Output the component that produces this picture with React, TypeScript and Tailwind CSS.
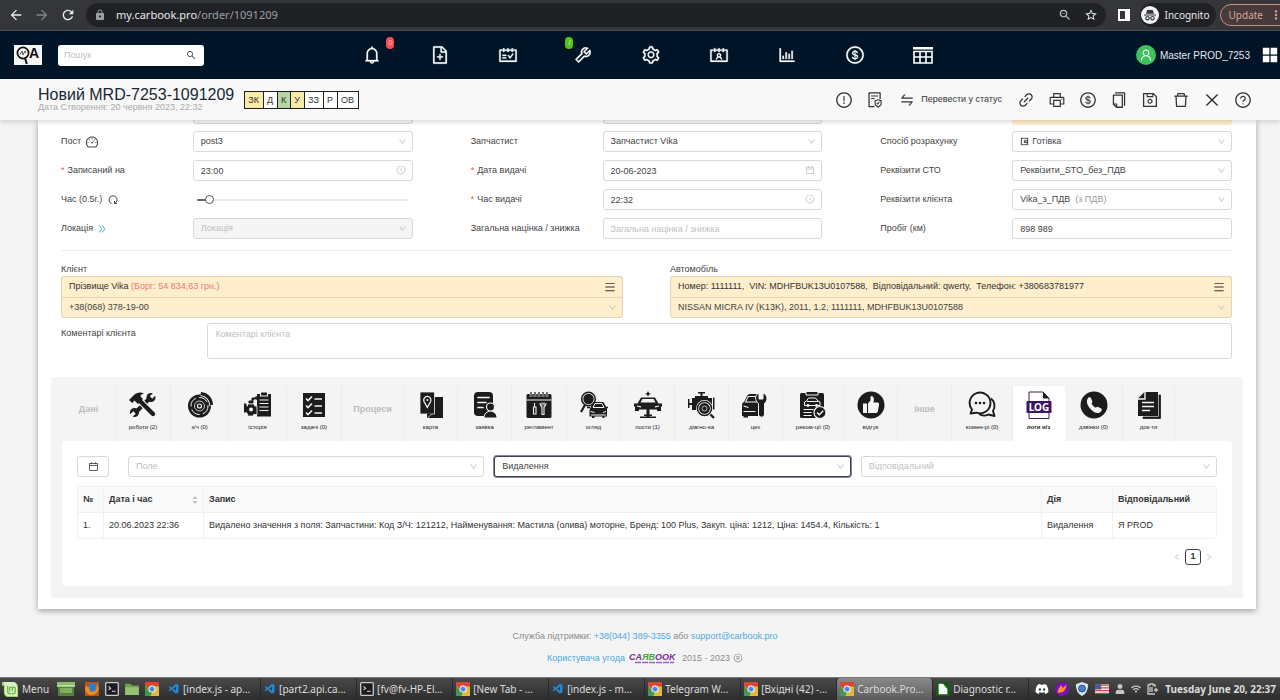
import type { ReactNode } from 'react'
import clsx from 'clsx'
import { twMerge } from 'tailwind-merge'
import {
  AiFillAppstore,
  AiOutlineBarChart,
  AiOutlineBell,
  AiOutlineCalendar,
  AiOutlineClockCircle,
  AiOutlineClose,
  AiOutlineContacts,
  AiOutlineCopy,
  AiOutlineDashboard,
  AiOutlineDelete,
  AiOutlineDollarCircle,
  AiOutlineDoubleRight,
  AiOutlineDown,
  AiOutlineExclamationCircle,
  AiOutlineFileAdd,
  AiOutlineFileProtect,
  AiOutlineLeft,
  AiOutlineLink,
  AiOutlineMenu,
  AiOutlinePrinter,
  AiOutlineQuestionCircle,
  AiOutlineRight,
  AiOutlineSave,
  AiOutlineSchedule,
  AiOutlineSearch,
  AiOutlineSetting,
  AiOutlineSwap,
  AiOutlineTool,
  AiOutlineTrademarkCircle,
  AiOutlineUser,
  AiOutlineWallet,
} from 'react-icons/ai'
import { FaDiscord, FaUser, FaWifi } from 'react-icons/fa'
import { MdArrowBack, MdArrowForward, MdLock, MdMoreVert, MdRefresh, MdStarBorder, MdZoomOut } from 'react-icons/md'
import { VscVscode } from 'react-icons/vsc'

const BG = '#f4f4f4'
const INK = '#1c1c1c'

/* ---------- tab icons, 28x28 ---------- */

function Glyph({ children }: { children: ReactNode }) {
  return (
    <svg viewBox="0 0 28 28" className="size-7" fill={INK} stroke="none" aria-hidden="true">
      {children}
    </svg>
  )
}

const RepairIcon = () => (
  <Glyph>
    <path d="M6 22 21 7" stroke={INK} strokeWidth="4" />
    <circle cx="5.500" cy="21.500" r="4.500" />
    <circle cx="22" cy="6.500" r="4.500" />
    <path d="m1 26 4.500-4.500M22 6.500 27 1.500" stroke={BG} strokeWidth="3.400" />
    <path d="m9 8 17 17" stroke={BG} strokeWidth="6.500" />
    <path d="m10 9 14 14" stroke={INK} strokeWidth="4.400" strokeLinecap="round" />
    <path d="m0 9 4.500-4.500C8 1 12 1 15 2.500c-2.500.5-3.500 1.500-3.500 3L14 8l-5 5-3.500-3.500-2.300 2.600z" />
  </Glyph>
)

const BrakeIcon = () => (
  <Glyph>
    <circle cx="13.500" cy="15" r="11.500" />
    <g fill="none" stroke={BG}>
      <circle cx="13.500" cy="15" r="8.500" strokeWidth="1" strokeDasharray="10 3" />
      <circle cx="13.500" cy="15" r="5" strokeWidth=".8" />
      <circle cx="13.500" cy="15" r="2" strokeWidth="1.200" />
      <path d="M14.500 4.500A10.500 10.500 0 0 1 24 15" strokeWidth="1.200" />
    </g>
    <path d="M15 1c7 .5 12 6 12 13h-3C24 8.500 20 4.500 14.500 4z" />
  </Glyph>
)

const HistoryIcon = () => (
  <Glyph>
    <path d="M13 3h3V1.500h8V3h3v22.500H13z" />
    <path d="M16.500 1v4h7V1M15.500 9h9M15.500 12.500h9M15.500 16h9M15.500 19.500h9" stroke={BG} strokeWidth="1.100" fill="none" />
    <path d="M1 15h2.500v-2h7v2H13v8.500H9.500V25h-6v-2L1 20z" stroke={BG} strokeWidth=".8" />
    <path d="M0 13h2v8H0zM5 10h4v2H5zM8 11V7h4" stroke={INK} strokeWidth="1" />
    <circle cx="7" cy="18.500" r="2" fill={BG} />
    <circle cx="12.500" cy="7" r="1.700" />
  </Glyph>
)

const TasksIcon = () => (
  <Glyph>
    <path d="M3 2h22v24H3z" />
    <path
      d="m6 7.500 2 2 4-4M6 14.500l2 2 4-4M6 21.500l2 2 4-4M14.500 8h7.500M14.500 15h7.500M14.500 22h7.500"
      fill="none"
      stroke={BG}
      strokeWidth="1.600"
    />
  </Glyph>
)

const MapIcon = () => (
  <Glyph>
    <path d="M17 6h9v21H11l4-4h2z" />
    <path d="M3 1h14.500v22H3z" stroke={BG} strokeWidth=".8" />
    <path d="M10.300 16.500 7 10.500a3.600 3.600 0 1 1 6.600 0z" fill="none" stroke={BG} strokeWidth="1.300" />
    <circle cx="10.300" cy="9" r="1" fill={BG} />
    <path d="M10 22.500h5l-5 4.500z" />
  </Glyph>
)

const RequestIcon = () => (
  <Glyph>
    <rect x="3" y="1" width="19" height="24" rx="4" />
    <path d="M7 6.500h11M7 11.500h8M7 16.500h5" stroke={BG} strokeWidth="1.700" strokeLinecap="round" />
    <circle cx="19.500" cy="16" r="4" stroke={BG} strokeWidth="1.200" />
    <path d="M13 27c0-9 13-9 13 0z" stroke={BG} strokeWidth="1" />
  </Glyph>
)

const ScheduleIcon = () => (
  <Glyph>
    <rect x="1.500" y="3" width="25" height="24" rx="1.500" />
    <path d="M1.500 9h25" stroke={BG} strokeWidth="1" />
    <path d="M6 1v5M10 1v5M14 1v5M18 1v5M22 1v5" stroke={BG} strokeWidth="2.500" />
    <path d="M6 1v5M10 1v5M14 1v5M18 1v5M22 1v5" stroke={INK} strokeWidth="1.200" />
    <path
      d="M9.500 12v4M8.500 16h2.500v7H8.500zM15 12c0 3 1 3 2 4v7.500h2V16c1-1 2-1 2-4M17 11.500v3M19 11.500v3"
      fill="none"
      stroke={BG}
      strokeWidth="1.100"
    />
  </Glyph>
)

const InspectIcon = () => (
  <Glyph>
    <circle cx="8.500" cy="8" r="6.800" fill="none" stroke={INK} strokeWidth="1.500" />
    <circle cx="8.500" cy="8" r="5.200" />
    <path d="m5 14-4 7" stroke={INK} strokeWidth="2.200" />
    <path d="M10 17.500 13.500 11h10l3.500 6.500v8h-2.500V27h-2v-1.500h-8V27H12v-1.500H9.500v-6z" />
    <path d="M13 16.500 15 12.500h7l2 4zM10.500 20.500l4 1M26 20.500l-3 1M11 24h15" fill="none" stroke={BG} strokeWidth="1" />
    <path d="M7 16.500h3M26 16.500h2" stroke={INK} strokeWidth="1.400" />
  </Glyph>
)

const LiftIcon = () => (
  <Glyph>
    <path d="M0 12.500h3.500L7 6.500h14l3.500 6H28V15l-1 1v4h-4v-1.500H5V20H1v-4l-1-1z" />
    <path d="m6.500 11.500 1.800-3.500h11.400l1.800 3.500z" fill={BG} />
    <path d="m3 15 4 .8M25 15l-4 .8" stroke={BG} strokeWidth="1.200" />
    <path d="M12.500 18h3v8h-3zM6 25.500h16V27H6zM10 23.500h8V25h-8z" />
    <path d="m14 0 1 2 2 1-2 .8-1 2-1-2-2-.8 2-1z" />
  </Glyph>
)

const DiagnosticIcon = () => (
  <Glyph>
    <path d="M10 1h7v1.500h-2.500V5h-2V2.500H10zM4 7h3V5h13v2h4v12H4zM0 8h1.500v9H0zM1.500 12H4v2H1.500zM25 6.500h1.500v12H25z" />
    <circle cx="16.500" cy="17.500" r="8.500" fill={BG} />
    <circle cx="16.500" cy="17.500" r="7" fill="none" stroke={INK} strokeWidth="1.500" />
    <circle cx="16.500" cy="17.500" r="5.400" />
    <circle cx="16.500" cy="17.500" r="2.500" fill="none" stroke={BG} strokeWidth=".7" />
    <path d="m22.500 23.500 3.500 3.500" stroke={INK} strokeWidth="2.400" />
  </Glyph>
)

const WorkshopIcon = () => (
  <Glyph>
    <path d="M0 14q0-2.500 2-3l3-6q1-2 3-2h8v22H6v1.500H1.500V25H0z" />
    <path d="m3.500 11 2.800-5.500H15V11zM1.500 15l5 1.500M1.500 20.500h12" fill="none" stroke={BG} strokeWidth="1.100" />
    <path d="M5 9.500 7 6h7v3.500z" />
    <path
      d="M16.500 12.500C12.500 9.500 12.500 4 17 2v6h4V2c5 2 5 7.500 1.500 10.500V24q-3 4.500-6 0z"
      stroke={BG}
      strokeWidth="1"
    />
  </Glyph>
)

const AdviceIcon = () => (
  <Glyph>
    <rect x="1" y="2" width="24" height="25" rx="1.500" />
    <path d="M7 .5h12V4H7z" stroke={BG} strokeWidth="1" />
    <path
      d="M5.500 14.500V11l2-1 2-3h7l2.500 3 2 1v3.500zM8 10.500h11M4.500 18.500h10M4.500 21.500h8M4.500 24.500h8"
      fill="none"
      stroke={BG}
      strokeWidth="1"
    />
    <circle cx="9" cy="14.500" r="1.400" fill={BG} />
    <circle cx="17.500" cy="14.500" r="1.400" fill={BG} />
    <circle cx="21" cy="21.500" r="6" stroke={BG} strokeWidth="1.200" />
    <path d="m18 21.500 2.300 2.300 4-4" fill="none" stroke={BG} strokeWidth="1.400" />
  </Glyph>
)

const ThumbIcon = () => (
  <Glyph>
    <circle cx="14" cy="14" r="13.500" />
    <path
      d="M6 12.500h4V22H6zM11 12.500l2.500-3V5.500c3-1 4 1.500 3 6H21q1.500.5 1 2.500l-1.200 6.500Q20.500 22 19 22h-8z"
      fill={BG}
    />
  </Glyph>
)

const CommentsIcon = () => (
  <Glyph>
    <g fill="none" stroke={INK} strokeWidth="1.900" strokeLinejoin="round">
      <path d="M2.500 22.500 4 18.500a10.400 10.400 0 1 1 4.500 3.200z" />
      <path d="M23 7.500a9.500 9.500 0 0 1 2 12.500l1.500 5-6-1.500q-5 2.500-9.500-.5" />
    </g>
    <circle cx="8" cy="12" r="1.300" />
    <circle cx="12" cy="12" r="1.300" />
    <circle cx="16" cy="12" r="1.300" />
  </Glyph>
)

const LogIcon = () => (
  <Glyph>
    <path d="M4 27.500V1h14l6 6v20.500z" fill="#fff" stroke="#3b1d5c" strokeWidth="1" />
    <path d="M18 1v6.500h6z" fill="#1c1c1c" />
    <rect x="1.500" y="10" width="25" height="12" rx="1" fill="#3b1466" />
    <text x="14" y="19.500" textAnchor="middle" fontSize="10" fontWeight="700" fontFamily="Noto Sans, sans-serif" fill="#fff">
      LOG
    </text>
  </Glyph>
)

const CallIcon = () => (
  <Glyph>
    <circle cx="14" cy="14" r="13.500" />
    <path
      d="M8.500 6.500q1.500-1 2.300.5l1.500 3q.5 1.200-.8 2.200c1 2.300 2.300 3.600 4.500 4.500q1-1.300 2.200-.7l3 1.600q1.300.8.400 2.200C19 23.500 15 22.500 11 18.500S5.500 9.500 8.500 6.500z"
      fill={BG}
    />
  </Glyph>
)

const DocsIcon = () => (
  <Glyph>
    <path d="M24 4h1.500v23.500H8V26h16z" stroke={INK} strokeWidth=".8" />
    <path d="M9.500 1H23v24H3V7.500z" />
    <path d="M10 1v7H3M7 11.500h12M7 15.500h12M7 19.500h8" fill="none" stroke={BG} strokeWidth="1.400" />
  </Glyph>
)

type Tab = { label: string; width: string; Icon?: () => ReactNode; active?: boolean }

const TABS: Tab[] = [
  { label: 'Дані', width: 'w-[54px]' },
  { label: 'роботи (2)', width: 'w-[55px]', Icon: RepairIcon },
  { label: 'з/ч (0)', width: 'w-[58px]', Icon: BrakeIcon },
  { label: 'історія', width: 'w-[58px]', Icon: HistoryIcon },
  { label: 'задачі (0)', width: 'w-[55px]', Icon: TasksIcon },
  { label: 'Процеси', width: 'w-[62px]' },
  { label: 'карта', width: 'w-[54px]', Icon: MapIcon },
  { label: 'заявка', width: 'w-[54px]', Icon: RequestIcon },
  { label: 'регламент', width: 'w-[55px]', Icon: ScheduleIcon },
  { label: 'огляд', width: 'w-[54px]', Icon: InspectIcon },
  { label: 'пости (1)', width: 'w-[54px]', Icon: LiftIcon },
  { label: 'діагно-ка', width: 'w-[54px]', Icon: DiagnosticIcon },
  { label: 'цех', width: 'w-[54px]', Icon: WorkshopIcon },
  { label: 'реком-ції (0)', width: 'w-[61px]', Icon: AdviceIcon },
  { label: 'відгук', width: 'w-[54px]', Icon: ThumbIcon },
  { label: 'Інше', width: 'w-[54px]' },
  { label: 'комен-рі (0)', width: 'w-[61px]', Icon: CommentsIcon },
  { label: 'логи н/з', width: 'w-[52px]', Icon: LogIcon, active: true },
  { label: 'дзвінки (0)', width: 'w-[58px]', Icon: CallIcon },
  { label: 'док-ти', width: 'w-[52px]', Icon: DocsIcon },
]

/* ---------- form controls ---------- */

const CONTROL =
  'block h-[21px] w-full appearance-none rounded-[3px] border border-[#d9d9d9] bg-white px-[7px] text-[#444] outline-none placeholder:text-[#bfbfbf]'

function Select({
  id,
  value,
  label,
  className,
  placeholder,
}: {
  id?: string
  value: string
  label?: string
  className?: string
  placeholder?: boolean
}) {
  return (
    <div className="relative">
      <select
        id={id}
        aria-label={label}
        className={twMerge(CONTROL, 'pr-6', placeholder && 'text-[#bfbfbf]', className)}
        defaultValue={value}
      >
        <option>{value}</option>
      </select>
      <AiOutlineDown className="pointer-events-none absolute top-1.5 right-1.5 size-[9px] text-[#bfbfbf]" />
    </div>
  )
}

function TextField({ id, value, placeholder, icon }: { id: string; value?: string; placeholder?: string; icon?: ReactNode }) {
  return (
    <div className="relative">
      <input id={id} type="text" className={CONTROL} defaultValue={value} placeholder={placeholder} />
      {icon && <span className="pointer-events-none absolute top-[5px] right-[7px] text-[#bfbfbf]">{icon}</span>}
    </div>
  )
}

function Field({
  id,
  label,
  required,
  icon,
  children,
}: {
  id: string
  label: string
  required?: boolean
  icon?: ReactNode
  children: ReactNode
}) {
  return (
    <div className="grid h-[21px] grid-cols-[3fr_5fr]">
      <label htmlFor={id} className="flex items-center whitespace-nowrap">
        {required && <span className="mr-[3px] text-[#ff4d4f]">*</span>}
        {label}
        {icon}
      </label>
      {children}
    </div>
  )
}

/* ---------- browser bar ---------- */

function BrowserBar() {
  return (
    <div className="flex h-[31px] items-center overflow-hidden border-b border-[#4b4c50] bg-[#35363a] pl-2 font-['Noto_Sans',sans-serif] text-[#e8eaed]">
      <button type="button" aria-label="Back">
        <MdArrowBack className="size-4" />
      </button>
      <button type="button" aria-label="Forward" className="ml-2.5 text-[#85868a]">
        <MdArrowForward className="size-4" />
      </button>
      <button type="button" aria-label="Reload" className="ml-2.5">
        <MdRefresh className="size-4" />
      </button>
      <div className="ml-2.5 flex h-6 min-w-0 flex-1 items-center rounded-full bg-[#202124] pr-2 pl-2">
        <MdLock className="size-3 text-[#9aa0a6]" />
        <span className="ml-2.5 text-[11px]">
          my.carbook.pro<span className="text-[#9aa0a6]">/order/1091209</span>
        </span>
        <MdZoomOut className="ml-auto size-3.5 text-[#bdc1c6]" />
        <MdStarBorder className="ml-3 size-3.5 text-[#e8eaed]" />
      </div>
      <svg viewBox="0 0 12 12" className="ml-3 size-3" aria-hidden="true">
        <path d="M1 1h10v10H1z" fill="none" stroke="#fff" strokeWidth="2" />
        <path d="M7 1h4v10H7z" fill="#fff" />
      </svg>
      <div className="ml-2.5 flex h-6 items-center rounded-full bg-[#202124] pr-1.5 pl-px">
        <svg viewBox="0 0 18 18" className="size-[18px]" aria-hidden="true">
          <circle cx="9" cy="9" r="9" fill="#f1f3f4" />
          <path d="M3 8.500h12v1H3zM5 7.700 6.200 4h5.600L13 7.700z" fill="#35363a" />
          <g fill="none" stroke="#35363a" strokeWidth="1.100">
            <circle cx="6.500" cy="12.200" r="1.700" />
            <circle cx="11.500" cy="12.200" r="1.700" />
            <path d="M8.200 12h1.600" />
          </g>
        </svg>
        <span className="ml-1.5 text-[10px]">Incognito</span>
      </div>
      <button
        type="button"
        className="-mr-3 ml-1 flex h-[22px] items-center rounded-full border border-[#c58f86] bg-[#463a3b] pr-2 pl-2 text-[10px] text-[#dca69c]"
      >
        Update
        <MdMoreVert className="ml-1.5 size-3.5" />
      </button>
    </div>
  )
}

/* ---------- application nav ---------- */

const GridIcon = ({ className }: { className?: string }) => (
  <svg viewBox="0 0 20 20" className={className} aria-hidden="true">
    <path d="M0 2h20v2.500H0z" fill="currentColor" />
    <path d="M1 6.500h18V18H1zM1 12h18M7 6.500V18M13 6.500V18" fill="none" stroke="currentColor" strokeWidth="1.600" />
  </svg>
)

const NAV = [
  { name: 'Сповіщення', Icon: AiOutlineBell, badge: 'red' },
  { name: 'Нове замовлення', Icon: AiOutlineFileAdd },
  { name: 'Розклад', Icon: AiOutlineSchedule },
  { name: 'Ремонт', Icon: AiOutlineTool, badge: 'green' },
  { name: 'Налаштування', Icon: AiOutlineSetting },
  { name: 'Контакти', Icon: AiOutlineContacts },
  { name: 'Звіти', Icon: AiOutlineBarChart },
  { name: 'Каса', Icon: AiOutlineDollarCircle },
  { name: 'Таблиця', Icon: GridIcon },
]

function NavBar() {
  return (
    <nav className="flex h-12 items-center bg-[#001428] pl-3.5 text-white">
      <svg viewBox="0 0 28 20" className="h-5 w-7" aria-label="QA">
        <path d="M0 0h28v20H0z" fill="#f5f5f5" />
        <circle cx="9" cy="8" r="5.600" fill="none" stroke="#111" strokeWidth="1.700" />
        <path d="m11 13 1.800 6" stroke="#111" strokeWidth="2" />
        <path d="M6 9.500 8 6l1 4 2-4 1 2" fill="none" stroke="#444" strokeWidth=".9" />
        <text x="15" y="13" fontSize="14" fontWeight="700" fontFamily="Liberation Sans, sans-serif" fill="#111">
          A
        </text>
      </svg>
      <div className="relative ml-4 w-[146px]">
        <input
          type="search"
          aria-label="Пошук"
          placeholder="Пошук"
          className="block h-[21px] w-full appearance-none rounded-[3px] bg-white px-1.5 text-[9px] text-[#444] outline-none placeholder:text-[#bfbfbf]"
        />
        <AiOutlineSearch className="pointer-events-none absolute top-[5px] right-2 size-2.5 text-[#333]" />
      </div>
      <div className="flex flex-1 justify-center gap-12 pr-11">
        {NAV.map(({ name, Icon, badge }) => (
          <button key={name} type="button" aria-label={name} className={clsx('relative', badge === 'green' && 'pl-[7px]')}>
            <Icon className="size-5 [stroke-width:14]" />
            {badge === 'red' && (
              <span className="absolute -top-2 -right-3 h-3 w-2 rounded-full bg-[#ff4d4f] text-center text-[7px] leading-3 text-[#ffd0d0]">
                0
              </span>
            )}
            {badge === 'green' && (
              <span className="absolute -top-2 -left-px h-3 w-2 rounded-full bg-[#52c41a] text-center text-[7px] leading-3 text-[#d5f5c4]">
                /
              </span>
            )}
          </button>
        ))}
      </div>
      <span className="grid size-5 place-items-center rounded-full bg-[#3fc25c]">
        <AiOutlineUser className="size-3.5" />
      </span>
      <span className="ml-1 text-[10px] text-[#e6eaee]">Master PROD_7253</span>
      <button type="button" aria-label="Меню" className="ml-2.5">
        <AiFillAppstore className="size-5" />
      </button>
    </nav>
  )
}

/* ---------- order header ---------- */

const STAGES = [
  { name: 'ЗК', color: 'bg-[#fbe9a8]' },
  { name: 'Д', color: 'bg-white' },
  { name: 'К', color: 'bg-[#b4d6a4]' },
  { name: 'У', color: 'bg-[#fbe9a8]' },
  { name: 'ЗЗ', color: 'bg-white' },
  { name: 'Р', color: 'bg-white' },
  { name: 'ОВ', color: 'bg-white' },
]

const ACTIONS = [
  { name: 'Посилання', Icon: AiOutlineLink },
  { name: 'Друк', Icon: AiOutlinePrinter },
  { name: 'Оплата', Icon: AiOutlineDollarCircle },
  { name: 'Копіювати', Icon: AiOutlineCopy },
  { name: 'Зберегти', Icon: AiOutlineSave },
  { name: 'Видалити', Icon: AiOutlineDelete },
  { name: 'Закрити', Icon: AiOutlineClose },
  { name: 'Довідка', Icon: AiOutlineQuestionCircle },
]

function OrderHeader() {
  return (
    <header className="relative z-10 flex h-[41px] items-center bg-[#f8f8f8] pr-7 pl-[38px] text-[#333] shadow-[0_2px_5px_rgba(0,0,0,0.15)]">
      <div>
        <h1 className="text-base leading-4 text-[#1b2733]">Новий MRD-7253-1091209</h1>
        <p className="text-[9px] leading-[9px] text-[#aaa]">Дата Створення: 20 червня 2023, 22:32</p>
      </div>
      <ul className="ml-2.5 flex border-l border-[#222]">
        {STAGES.map((stage) => (
          <li
            key={stage.name}
            className={clsx('h-[18px] border-y border-r border-[#222] pr-1 pl-[3px] text-[9px] leading-4 text-[#333]', stage.color)}
          >
            {stage.name}
          </li>
        ))}
      </ul>
      <div className="ml-auto flex items-center gap-[13px]">
        <button type="button" aria-label="Увага">
          <AiOutlineExclamationCircle className="size-[18px]" />
        </button>
        <button type="button" aria-label="Документ">
          <AiOutlineFileProtect className="size-[18px]" />
        </button>
        <button type="button" className="mr-0.5 ml-0.5 flex items-center gap-1.5 text-[9px]">
          <AiOutlineSwap className="size-4" />
          Перевести у статус
        </button>
        {ACTIONS.map(({ name, Icon }) => (
          <button key={name} type="button" aria-label={name}>
            <Icon className="size-[18px]" />
          </button>
        ))}
      </div>
    </header>
  )
}

/* ---------- order form ---------- */

function OrderForm() {
  return (
    <form className="pr-6 pl-[23px]">
      <div className="mb-1.5 grid grid-cols-3 gap-x-[58px]">
        {['bg-[#f5f5f5]', 'bg-[#f5f5f5]'].map((color, i) => (
          <div key={i} className="grid h-[5px] grid-cols-[3fr_5fr] items-start">
            <div className={clsx('col-start-2 h-1 rounded-b-[3px] border border-t-0 border-[#d9d9d9]', color)} />
          </div>
        ))}
        <div className="grid h-[5px] grid-cols-[3fr_5fr]">
          <div className="col-start-2 rounded-b-[3px] bg-[#ffeecb]" />
        </div>
      </div>

      <div className="grid grid-cols-3 gap-x-[58px]">
        <div className="flex flex-col gap-2">
          <Field id="post" label="Пост" icon={<AiOutlineDashboard className="ml-1 size-3.5" />}>
            <Select id="post" value="post3" />
          </Field>
          <Field id="begin" label="Записаний на" required>
            <TextField id="begin" value="23:00" icon={<AiOutlineClockCircle className="size-2.5" />} />
          </Field>
          <Field
            id="hours"
            label="Час (0.5г.)"
            icon={
              <svg viewBox="0 0 10 10" className="ml-1.5 size-2.5" fill="none" stroke="currentColor" aria-hidden="true">
                <path d="M3.500 8.500A4 4 0 1 1 7 8.300M9 8.500H6.500V6" />
              </svg>
            }
          >
            <input
              id="hours"
              type="range"
              min="0"
              max="100"
              defaultValue="4"
              className="mx-1 my-auto h-0.5 appearance-none rounded bg-[linear-gradient(to_right,#6d6377_5%,#ececec_5%)] [&::-webkit-slider-thumb]:size-[9px] [&::-webkit-slider-thumb]:appearance-none [&::-webkit-slider-thumb]:rounded-full [&::-webkit-slider-thumb]:border [&::-webkit-slider-thumb]:border-[#5a5066] [&::-webkit-slider-thumb]:bg-white"
            />
          </Field>
          <Field id="location" label="Локація" icon={<AiOutlineDoubleRight className="ml-1 size-2.5 text-[#58b1e8]" />}>
            <Select id="location" value="Локація" placeholder className="bg-[#f5f5f5]" />
          </Field>
        </div>

        <div className="flex flex-col gap-2">
          <Field id="storekeeper" label="Запчастист">
            <Select id="storekeeper" value="Запчастист Vika" />
          </Field>
          <Field id="issueDate" label="Дата видачі" required>
            <TextField id="issueDate" value="20-06-2023" icon={<AiOutlineCalendar className="size-2.5" />} />
          </Field>
          <Field id="issueTime" label="Час видачі" required>
            <TextField id="issueTime" value="22:32" icon={<AiOutlineClockCircle className="size-2.5" />} />
          </Field>
          <Field id="discount" label="Загальна націнка / знижка">
            <TextField id="discount" placeholder="Загальна націнка / знижка" />
          </Field>
        </div>

        <div className="flex flex-col gap-2">
          <Field id="payment" label="Спосіб розрахунку">
            <div className="relative">
              <Select id="payment" value="Готівка" className="pl-[19px]" />
              <AiOutlineWallet className="pointer-events-none absolute top-1.5 left-2 size-[9px] text-[#333] [stroke-width:30]" />
            </div>
          </Field>
          <Field id="station" label="Реквізити СТО">
            <Select id="station" value="Реквізити_STO_без_ПДВ" />
          </Field>
          <Field id="clientReq" label="Реквізити клієнта">
            <div className="relative">
              <Select id="clientReq" value="Vika_з_ПДВ" />
              <span className="pointer-events-none absolute top-1 left-[63px] leading-[13px] text-[#999]">(з ПДВ)</span>
            </div>
          </Field>
          <Field id="mileage" label="Пробіг (км)">
            <TextField id="mileage" value="898 989" />
          </Field>
        </div>
      </div>

      <div className="mt-[11px] grid grid-cols-2 gap-x-[47px] border-t border-[#ededed] pt-[11px]">
        <div>
          <label htmlFor="client" className="block leading-[14px]">
            Клієнт
          </label>
          <div className="flex h-[21px] items-center rounded-t-[3px] border border-b-0 border-[#e3d6b8] bg-[#ffeecb] pr-1.5 pl-[7px] text-[#333]">
            Прізвище Vika&nbsp;<span className="text-[#e87d74]">(Борг: 54 834,63 грн.)</span>
            <AiOutlineMenu className="ml-auto size-3" />
          </div>
          <Select id="client" value="+38(068) 378-19-00" className="rounded-t-none border-[#e3d6b8] bg-[#ffeecb]" />
        </div>
        <div>
          <label htmlFor="car" className="block leading-[14px]">
            Автомобіль
          </label>
          <div className="flex h-[21px] items-center rounded-t-[3px] border border-b-0 border-[#e3d6b8] bg-[#ffeecb] pr-1.5 pl-[7px] text-[#333]">
            Номер: 1111111,&nbsp; VIN: MDHFBUK13U0107588,&nbsp; Відповідальний: qwerty,&nbsp; Телефон: +380683781977
            <AiOutlineMenu className="ml-auto size-3" />
          </div>
          <Select
            id="car"
            value="NISSAN MICRA IV (K13K), 2011, 1.2, 1111111, MDHFBUK13U0107588"
            className="rounded-t-none border-[#e3d6b8] bg-[#ffeecb]"
          />
        </div>
      </div>

      <div className="mt-[5px] grid grid-cols-[1fr_7fr]">
        <label htmlFor="comments" className="pt-1">
          Коментарі клієнта
        </label>
        <textarea
          id="comments"
          placeholder="Коментарі клієнта"
          className="block h-9 w-full resize-none rounded-[3px] border border-[#d9d9d9] px-[7px] py-1 outline-none placeholder:text-[#bfbfbf]"
        />
      </div>
    </form>
  )
}

/* ---------- logs tab ---------- */

const TH = 'border-r border-b border-[#f0f0f0] px-[5px] text-left font-bold last:border-r-0'
const TD = 'border-r border-[#f0f0f0] px-[5px] last:border-r-0'

function LogsPanel() {
  return (
    <section className="mx-[11px] rounded bg-white px-[15px] pt-[15px] pb-[21px]">
      <div className="flex">
        <button
          type="button"
          aria-label="Обрати дату"
          className="mr-[19px] grid h-[21px] w-8 place-items-center rounded-[3px] border border-[#d9d9d9] text-[#333]"
        >
          <AiOutlineCalendar className="size-[11px]" />
        </button>
        <div className="grid flex-1 grid-cols-3 gap-x-[10px]">
          <Select label="Поле" value="Поле" placeholder />
          <Select label="Дія" value="Видалення" className="border-[#463b52] ring-1 ring-[#8d8499]" />
          <Select label="Відповідальний" value="Відповідальний" placeholder />
        </div>
      </div>

      <table className="mt-[9px] w-full table-fixed border-separate border-spacing-0 rounded-[3px] border border-[#f0f0f0] text-[#333]">
        <colgroup>
          <col className="w-[26px]" />
          <col className="w-[100px]" />
          <col />
          <col className="w-[71px]" />
          <col className="w-[103px]" />
        </colgroup>
        <thead>
          <tr className="h-[26px] bg-[#fafafa]">
            <th className={TH}>№</th>
            <th className={TH}>
              <span className="flex items-center justify-between">
                Дата і час
                <svg viewBox="0 0 6 10" className="h-2.5 w-1.5" fill="#bfbfbf" aria-hidden="true">
                  <path d="m3 1 2.500 3h-5zM3 9 .5 6h5z" />
                </svg>
              </span>
            </th>
            <th className={TH}>Запис</th>
            <th className={TH}>Дія</th>
            <th className={TH}>Відповідальний</th>
          </tr>
        </thead>
        <tbody>
          <tr className="h-[25px]">
            <td className={TD}>1.</td>
            <td className={TD}>20.06.2023 22:36</td>
            <td className={TD}>
              Видалено значення з поля: Запчастини: Код З/Ч: 121212, Найменування: Мастила (олива) моторне, Бренд: 100 Plus,
              Закуп. ціна: 1212, Ціна: 1454.4, Кількість: 1
            </td>
            <td className={TD}>Видалення</td>
            <td className={TD}>Я PROD</td>
          </tr>
        </tbody>
      </table>

      <div className="mt-2.5 flex items-center justify-end gap-1 pr-1 text-[#bfbfbf]">
        <button type="button" aria-label="Попередня">
          <AiOutlineLeft className="size-2" />
        </button>
        <button type="button" className="size-4 rounded-[3px] border border-[#463b52] font-bold text-[#333]">
          1
        </button>
        <button type="button" aria-label="Наступна">
          <AiOutlineRight className="size-2" />
        </button>
      </div>
    </section>
  )
}

function TabsPanel() {
  return (
    <div className="mx-[13px] mt-[18px] bg-[#f4f4f4] pt-[9px] pb-3">
      <div role="tablist" className="mx-[11px] flex h-[55px]">
        {TABS.map(({ label, width, Icon, active }) =>
          Icon ? (
            <button
              key={label}
              type="button"
              role="tab"
              aria-selected={!!active}
              className={clsx(
                'flex flex-col items-center border-r pt-[5px] whitespace-nowrap',
                width,
                active ? 'border-white bg-white' : 'border-[#ebebeb]',
              )}
            >
              <Icon />
              <span className={clsx('mt-1 text-[6px] leading-2 text-[#222]', active && 'font-bold')}>{label}</span>
            </button>
          ) : (
            <span key={label} className={clsx('grid place-items-center border-r border-[#ebebeb] pb-2 font-bold text-[#bdbdbd]', width)}>
              {label}
            </span>
          ),
        )}
      </div>
      <LogsPanel />
    </div>
  )
}

function Footer() {
  return (
    <footer className="mt-5 mr-6 ml-[34px] flex flex-1 flex-col items-center gap-2 text-[9px] leading-[14px] text-[#8c8c8c]">
      <p>
        Служба підтримки:{' '}
        <a href="tel:+380443893355" className="text-[#4da9e0]">
          +38(044) 389-3355
        </a>{' '}
        або{' '}
        <a href="mailto:support@carbook.pro" className="text-[#4da9e0]">
          support@carbook.pro
        </a>
      </p>
      <p className="flex items-center">
        <a href="#terms" className="text-[#4da9e0]">
          Користувача угода
        </a>
        <svg viewBox="0 0 49 14" className="mx-1 h-3.5 w-[49px]" aria-label="CARBOOK">
          <text x="0" y="9" fontSize="9" fontWeight="700" fontStyle="italic" fontFamily="Liberation Sans, sans-serif" fill="#7a2c9e">
            CA<tspan fill="#43a83c">ЯB</tspan>OOK
          </text>
          <path d="M6 11.500h39" stroke="#a05fc0" strokeWidth="1.500" strokeDasharray="6 1" />
        </svg>
        <span className="mr-[3px]">2015 - 2023</span>
        <AiOutlineTrademarkCircle className="size-2.5" />
      </p>
    </footer>
  )
}

/* ---------- desktop panel ---------- */

const Chrome = () => (
  <svg viewBox="0 0 16 16" className="size-3.5 shrink-0" aria-hidden="true">
    <path d="M0 0h16v16H0z" fill="#e2b93b" />
    <path d="M0 0h16v5H8L4 9 0 3z" fill="#dc4437" />
    <path d="M0 3l4.500 7L8 12l-2 4H0z" fill="#3f9b4a" />
    <circle cx="8" cy="8" r="4" fill="#fff" />
    <circle cx="8" cy="8" r="2.900" fill="#4a86e8" />
  </svg>
)

const Terminal = () => (
  <svg viewBox="0 0 16 16" className="size-3.5 shrink-0" aria-hidden="true">
    <rect x=".8" y=".8" width="14.400" height="14.400" rx="1" fill="#1c1c22" stroke="#c9c9c9" strokeWidth="1.500" />
    <path d="m4 5 2.500 2L4 9M8 10.500h4" fill="none" stroke="#ddd" strokeWidth="1.200" />
  </svg>
)

const Code = () => <VscVscode className="size-3 shrink-0 text-[#2489d0]" />

const Calc = () => (
  <svg viewBox="0 0 16 16" className="size-3.5 shrink-0" aria-hidden="true">
    <path d="M0 0h16v16H0z" fill="#155c1c" />
    <path d="M3 2h5l5 6v6H3z" fill="#f3fff3" />
  </svg>
)

const WINDOWS = [
  { title: '[index.js - ap...', Icon: Code },
  { title: '[part2.api.ca...', Icon: Code },
  { title: '[fv@fv-HP-El...', Icon: Terminal },
  { title: '[New Tab - ...', Icon: Chrome },
  { title: '[index.js - m...', Icon: Code },
  { title: 'Telegram W...', Icon: Chrome },
  { title: '[Вхідні (42) -...', Icon: Chrome },
  { title: 'Carbook.Pro...', Icon: Chrome, active: true },
  { title: 'Diagnostic r...', Icon: Calc },
]

function Taskbar() {
  return (
    <div className="flex h-[23px] items-center border-t border-[#777] bg-[linear-gradient(#4a4a4a,#2c2c2c)] pr-1 pl-0.5 font-['Noto_Sans',sans-serif] text-[10px] whitespace-nowrap text-[#dcdcdc]">
      <button type="button" className="flex items-center">
        <svg viewBox="0 0 18 18" className="size-[17px]" aria-hidden="true">
          <path d="M0 1h11q6 0 6 6v10H7q-5 0-5-5V5H0z" fill="#9fd66c" />
          <path d="M2 1h9q5 0 5 6v9H8q-5 0-5-5V4H2z" fill="#d9f0c4" />
          <path d="M6 5v6q0 2.500 2.500 2.500h3Q14 13.500 14 11V8q0-1.500-1.500-1.500T11 8v3M11 8q0-1.500-1.500-1.500T8 8v3" fill="none" stroke="#69b53f" strokeWidth="1.300" />
        </svg>
        <span className="ml-[3px]">Menu</span>
      </button>
      <div className="ml-2 flex items-center gap-1.5">
        <svg viewBox="0 0 18 14" className="mr-1 h-3.5 w-[18px]" aria-hidden="true">
          <path d="M0 0h18v5H0z" fill="#8bbf68" />
          <path d="M1 5h16v9H1z" fill="#55803f" />
          <path d="M3 6h12v5H3z" fill="#7fae62" />
          <path d="M0 3h18v1.500H0z" fill="#c1dba9" />
        </svg>
        <svg viewBox="0 0 16 16" className="size-3.5" aria-hidden="true">
          <path d="M0 0h16v16H0z" fill="#b3541c" />
          <circle cx="8.500" cy="7" r="5.500" fill="#3a7cc4" />
          <path d="M1 3q1 3 4 3-1 3 2 5 4 1 6-3 1-4-1-7 5 4 3 9-2 5-8 5-6-1-7-7z" fill="#f28a1d" />
        </svg>
        <Terminal />
        <svg viewBox="0 0 16 14" className="h-3 w-3.5" aria-hidden="true">
          <path d="M0 1h6l2 2h8v11H0z" fill="#6ea052" />
          <path d="M0 5h16v9H0z" fill="#93c275" />
        </svg>
        <Chrome />
      </div>
      <div className="ml-1.5 flex h-full min-w-0 flex-1">
        {WINDOWS.map(({ title, Icon, active }) => (
          <button
            key={title}
            type="button"
            className={clsx(
              'flex min-w-0 flex-1 items-center gap-[3px] overflow-hidden border-r border-[#2a2a2a] pl-[3px]',
              active && 'rounded-t bg-[linear-gradient(#8a8a8a,#5c5c5c)]',
            )}
          >
            <Icon />
            {title}
          </button>
        ))}
      </div>
      <div className="ml-1.5 flex items-center gap-1.5">
        <FaDiscord className="size-3.5 text-white" />
        <svg viewBox="0 0 16 16" className="size-3.5" aria-hidden="true">
          <circle cx="8" cy="8" r="8" fill="#7a12b8" />
          <path d="M3 12q0-5 5-9-.5 3 1 3.500L13 3q0 4-2 6-2 4-8 3z" fill="#ff8a2a" />
        </svg>
        <svg viewBox="0 0 16 16" className="size-3.5" aria-hidden="true">
          <path d="m8 0 7 2.500q0 10-7 13.500Q1 12.500 1 2.500z" fill="#dfe6ee" />
          <circle cx="8" cy="7.500" r="4" fill="#4a7fc0" stroke="#274d80" />
        </svg>
        <svg viewBox="0 0 16 11" className="h-2.5 w-3.5" aria-hidden="true">
          <path d="M0 0h16v11H0z" fill="#eee" />
          <path d="M0 1h16M0 4.200h16M0 7.300h16M0 10.400h16" stroke="#c8494c" strokeWidth="1.500" />
          <path d="M0 0h7v6H0z" fill="#4a5a94" />
        </svg>
        <FaUser className="size-2.5 text-[#c8c8c8]" />
        <FaWifi className="size-2.5 text-[#c8c8c8]" />
        <svg viewBox="0 0 12 12" className="size-3" fill="none" stroke="#c8c8c8" strokeWidth="1.300" aria-hidden="true">
          <path d="M8 11H1V2h2V.8h3V2h2v2M3 4v5M5 4v5M7 7h4M9 5v4" />
        </svg>
        <span className="font-bold">Tuesday June 20, 22:37</span>
      </div>
    </div>
  )
}

export default function App() {
  return (
    <div className="flex min-h-screen flex-col bg-[#f4f4f4] font-['Liberation_Sans',Arial,sans-serif]">
      <BrowserBar />
      <NavBar />
      <OrderHeader />
      <main className="mr-6 ml-[38px] bg-white pb-[11px] text-[9px] text-[#444] shadow-[0_2px_6px_rgba(0,0,0,0.35)]">
        <OrderForm />
        <TabsPanel />
      </main>
      <Footer />
      <Taskbar />
    </div>
  )
}
